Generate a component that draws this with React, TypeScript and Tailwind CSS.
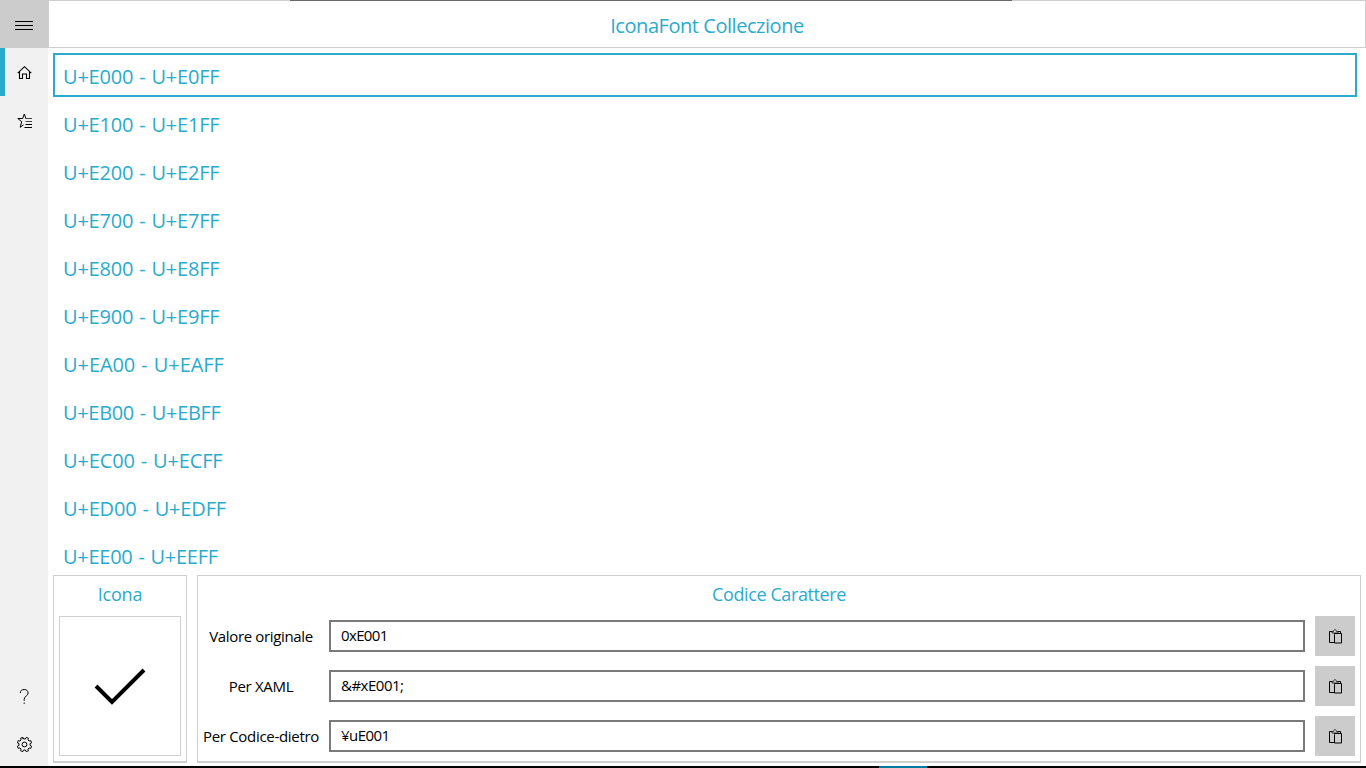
import React from "react";

const ranges: [string, string][] = [
  ["U+E000 - U+E0FF", "tracking-[-0.2px]"],
  ["U+E100 - U+E1FF", "tracking-[-0.2px]"],
  ["U+E200 - U+E2FF", "tracking-[-0.2px]"],
  ["U+E700 - U+E7FF", "tracking-[-0.2px]"],
  ["U+E800 - U+E8FF", "tracking-[-0.2px]"],
  ["U+E900 - U+E9FF", "tracking-[-0.2px]"],
  ["U+EA00 - U+EAFF", "tracking-[-0.07px]"],
  ["U+EB00 - U+EBFF", "tracking-[-0.33px]"],
  ["U+EC00 - U+ECFF", "tracking-[-0.15px]"],
  ["U+ED00 - U+EDFF", "tracking-[-0.18px]"],
  ["U+EE00 - U+EEFF", "tracking-[-0.27px]"],
];

const codes = [
  { label: "Valore originale", value: "0xE001", labelClass: "tracking-[-0.35px]", valueClass: "tracking-[-0.65px]" },
  { label: "Per XAML", value: "&#xE001;", labelClass: "tracking-[-0.3px]", valueClass: "tracking-[-0.5px]" },
  { label: "Per Codice-dietro", value: "¥uE001", labelClass: "tracking-[-0.3px]", valueClass: "tracking-[-0.55px]" },
];

function HomeIcon() {
  return (
    <svg width="16" height="16" viewBox="0 0 16 16" fill="none" stroke="#000" strokeWidth="1.1">
      <path d="M.7 8.200 7.500 1.700l6.800 6.500M2.500 6.500v7h3V9h4v4.500h3v-7" />
    </svg>
  );
}

function FavoriteListIcon() {
  return (
    <svg width="16" height="16" viewBox="0 0 16 16" fill="none" stroke="#000" strokeWidth="1">
      <path d="M9.200 5.500H8.900L7.300 1 5.700 5.500H.8l3.900 3.200L3.200 14.300l3.300-2.500" />
      <path d="M8.500 5.500H15M8.500 8.500H15" stroke="#444" />
      <path d="M8.500 11.500H15M7.500 14.500H15" />
    </svg>
  );
}

function HelpIcon() {
  return (
    <svg width="16" height="16" viewBox="1 1 16 16" fill="none" stroke="#000" strokeWidth="1">
      <path d="M4.300 5C4.300 2.700 5.900 1.500 8.200 1.500s3.900 1.300 3.900 3.500c0 2.900-3.900 3.200-3.900 6.200V12.800M8.200 14.500v1.400" />
    </svg>
  );
}

function SettingsIcon() {
  return (
    <svg width="16" height="16" viewBox="0.500 0.500 16 16" fill="none" stroke="#000" strokeWidth="1">
      <path d="M6.600 2.500 6.300.9 4 1.800l.6 1.600-1.200 1.200L1.800 4 .9 6.300l1.600.8v1.800l-1.600.8L1.800 12l1.600-.6 1.200 1.200L4 14.200l2.300.9.8-1.600h1.800l.8 1.600 2.300-.9-.6-1.600 1.200-1.200 1.600.6.9-2.300-1.600-.8V7.100l1.600-.8-.9-2.300-1.600.6-1.200-1.200.6-1.600L9.700.9l-.8 1.600H7.100L6.300.9" />
      <circle cx="8" cy="8" r="2.400" />
    </svg>
  );
}

function PasteIcon() {
  return (
    <svg width="16" height="16" viewBox="0 0 16 16" fill="none" stroke="#000" strokeWidth="1">
      <path d="M6.500 13.500h-5v-11h3M10 2.500h2.500V4.500" />
      <path d="M4 4v-1.500h1.500C5.500.1 8.500.1 8.500 2.500H10V4z" stroke="#333" />
      <path d="M6.500 5.500V4.500h7v9.500h-7z" />
    </svg>
  );
}

function NavButton({ children, active = false }: { children: React.ReactNode; active?: boolean }) {
  return (
    <button className={`flex h-12 w-12 items-center border-l-[5px] pt-[2px] pl-3 ${active ? "border-[#2babcb]" : "border-transparent"}`}>
      {children}
    </button>
  );
}

export default function App() {
  return (
    <div className="flex h-[768px] w-[1366px] flex-col overflow-hidden bg-white font-['Open_Sans',sans-serif] text-black">
      <div className="relative flex min-h-0 flex-1">
        <div className="absolute top-0 left-[290px] h-px w-[722px] bg-[#686868]" />
        <nav className="flex h-[768px] w-12 shrink-0 flex-col bg-[#f1f1f1]">
          <button className="flex h-12 w-12 items-center justify-center bg-[#cccccc] pt-[3px]">
            <svg width="18" height="9" viewBox="0 0 18 9" fill="none" stroke="#000">
              <path d="M0 .5h18M0 4.500h18M0 8.500h18" />
            </svg>
          </button>
          <NavButton active><HomeIcon /></NavButton>
          <NavButton><FavoriteListIcon /></NavButton>
          <div className="flex-1" />
          <NavButton><HelpIcon /></NavButton>
          <NavButton><SettingsIcon /></NavButton>
        </nav>
        <main className="flex min-w-0 flex-1 flex-col">
          <header className="flex h-12 shrink-0 items-center justify-center border border-[#cfcfcf] pt-[3px] text-[20px] text-[#2babcb]">
            <h1 className="whitespace-nowrap tracking-[-0.45px]">IconaFont Colleczione</h1>
          </header>
          <ul className="flex h-[527px] shrink-0 flex-col gap-1 overflow-hidden pt-[5px] pr-[9px] pl-[5px] text-[20px] text-[#2babcb]">
            {ranges.map(([range, spacing], i) => (
              <li key={range} className={`flex h-11 shrink-0 items-center border-2 pt-[3px] pl-2 ${i === 0 ? "border-[#2babcb]" : "border-transparent"}`}>
                <span className={`whitespace-nowrap [word-spacing:1px] ${spacing}`}>{range}</span>
              </li>
            ))}
          </ul>
          <div className="flex h-[188px] gap-[10px] px-[5px]">
            <section className="flex w-[134px] shrink-0 flex-col border border-b-2 border-[#cfcfcf] p-[5px]">
              <h2 className="flex h-[35px] items-center justify-center pb-[8px] text-[18px] text-[#2babcb]">
                <span className="tracking-[-0.2px]">Icona</span>
              </h2>
              <div className="flex h-[140px] items-center justify-center border border-[#cfcfcf]">
                <svg width="52" height="38" viewBox="0 0 52 38" fill="none" stroke="#000" strokeWidth="4">
                  <path d="M2 19 18 35 50 3" />
                </svg>
              </div>
            </section>
            <section className="flex min-w-0 flex-1 flex-col border border-b-2 border-[#cfcfcf] p-[5px]">
              <h2 className="flex h-[35px] shrink-0 items-center justify-center pb-[8px] text-[18px] text-[#2babcb]">
                <span className="tracking-[-0.4px]">Codice Carattere</span>
              </h2>
              <div className="flex flex-col gap-[10px]">
                {codes.map((c) => (
                  <div key={c.label} className="flex h-10 items-center">
                    <label className="flex w-[116px] shrink-0 justify-center text-[15px] whitespace-nowrap">
                      <span className={c.labelClass}>{c.label}</span>
                    </label>
                    <div className="ml-[10px] flex h-8 flex-1 items-center border-2 border-[#7a7a7a] pb-[2px] pl-[10px] text-[15px]">
                      <span className={c.valueClass}>{c.value}</span>
                    </div>
                    <button className="ml-[10px] flex h-10 w-10 items-center justify-center bg-[#cccccc] pt-[2px] pl-px">
                      <PasteIcon />
                    </button>
                  </div>
                ))}
              </div>
            </section>
          </div>
        </main>
      </div>
      <footer className="relative flex h-[2px] shrink-0 bg-black pl-[879px]">
        <div className="w-12 bg-[#007a9e]" />
      </footer>
    </div>
  );
}
